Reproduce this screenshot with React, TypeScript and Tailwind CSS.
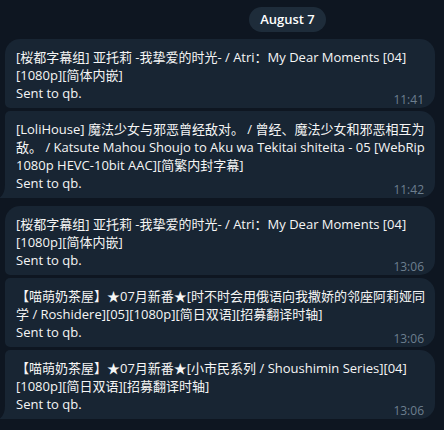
import React from "react";

type Msg = {
  lines: string[];
  time: string;
  first?: boolean;
  last?: boolean;
};

const groups: Msg[][] = [
  [
    {
      lines: [
        "[桜都字幕组] 亚托莉 -我挚爱的时光- / Atri：My Dear Moments [04]",
        "[1080p][简体内嵌]",
        "Sent to qb.",
      ],
      time: "11:41",
      first: true,
    },
    {
      lines: [
        "[LoliHouse] 魔法少女与邪恶曾经敌对。 / 曾经、魔法少女和邪恶相互为",
        "敌。 / Katsute Mahou Shoujo to Aku wa Tekitai shiteita - 05 [WebRip",
        "1080p HEVC-10bit AAC][简繁内封字幕]",
        "Sent to qb.",
      ],
      time: "11:42",
      last: true,
    },
  ],
  [
    {
      lines: [
        "[桜都字幕组] 亚托莉 -我挚爱的时光- / Atri：My Dear Moments [04]",
        "[1080p][简体内嵌]",
        "Sent to qb.",
      ],
      time: "13:06",
      first: true,
    },
    {
      lines: [
        "【喵萌奶茶屋】★07月新番★[时不时会用俄语向我撒娇的邻座阿莉娅同",
        "学 / Roshidere][05][1080p][简日双语][招募翻译时轴]",
        "Sent to qb.",
      ],
      time: "13:06",
    },
    {
      lines: [
        "【喵萌奶茶屋】★07月新番★[小市民系列 / Shoushimin Series][04]",
        "[1080p][简日双语][招募翻译时轴]",
        "Sent to qb.",
      ],
      time: "13:06",
      last: true,
    },
  ],
];

const Bubble = ({ msg }: { msg: Msg }) => {
  const tl = msg.first ? "rounded-tl-[15px]" : "rounded-tl-[5px]";
  const bl = msg.last ? "rounded-bl-none" : "rounded-bl-[5px]";
  const body = msg.lines.slice(0, -1);
  const tail = msg.lines[msg.lines.length - 1];
  return (
    <div
      className={`relative ml-[5px] w-[430px] bg-[#182533] ${tl} ${bl} rounded-tr-[15px] rounded-br-[15px] px-[11px] pt-[9px] pb-[6px] text-[13px] leading-[18px] text-[#f5f5f5]`}
    >
      {body.map((l, i) => (
        <div key={i} className="h-[18px] whitespace-nowrap">
          {l}
        </div>
      ))}
      <div className="flex h-[18px] items-baseline justify-between">
        <span>{tail}</span>
        <span className="translate-y-[6px] text-[12px] text-[#6d7f8f]">
          {msg.time}
        </span>
      </div>
      {msg.last && (
        <svg
          className="absolute bottom-0 left-[-6px]"
          width="6"
          height="14"
          viewBox="0 0 6 14"
        >
          <path d="M6 0 Q6 11 0 14 L6 14 Z" fill="#182533" />
        </svg>
      )}
    </div>
  );
};

const App = () => {
  return (
    <div
      className="w-[444px] h-[430px] overflow-hidden bg-[#0e1621] pt-[7px]"
      style={{ fontFamily: "'Open Sans', 'Noto Sans CJK SC', sans-serif" }}
    >
      <div className="ml-[249px] flex h-[25px] w-[77px] items-center justify-center rounded-full bg-[#1e2c3a] text-[13px] font-semibold text-white">
        August 7
      </div>

      <div className="mt-[7px] flex flex-col gap-[8px]">
        {groups.map((g, gi) => (
          <div key={gi} className="flex flex-col gap-[3px]">
            {g.map((m, mi) => (
              <Bubble key={mi} msg={m} />
            ))}
          </div>
        ))}
      </div>
    </div>
  );
};

export default App;
